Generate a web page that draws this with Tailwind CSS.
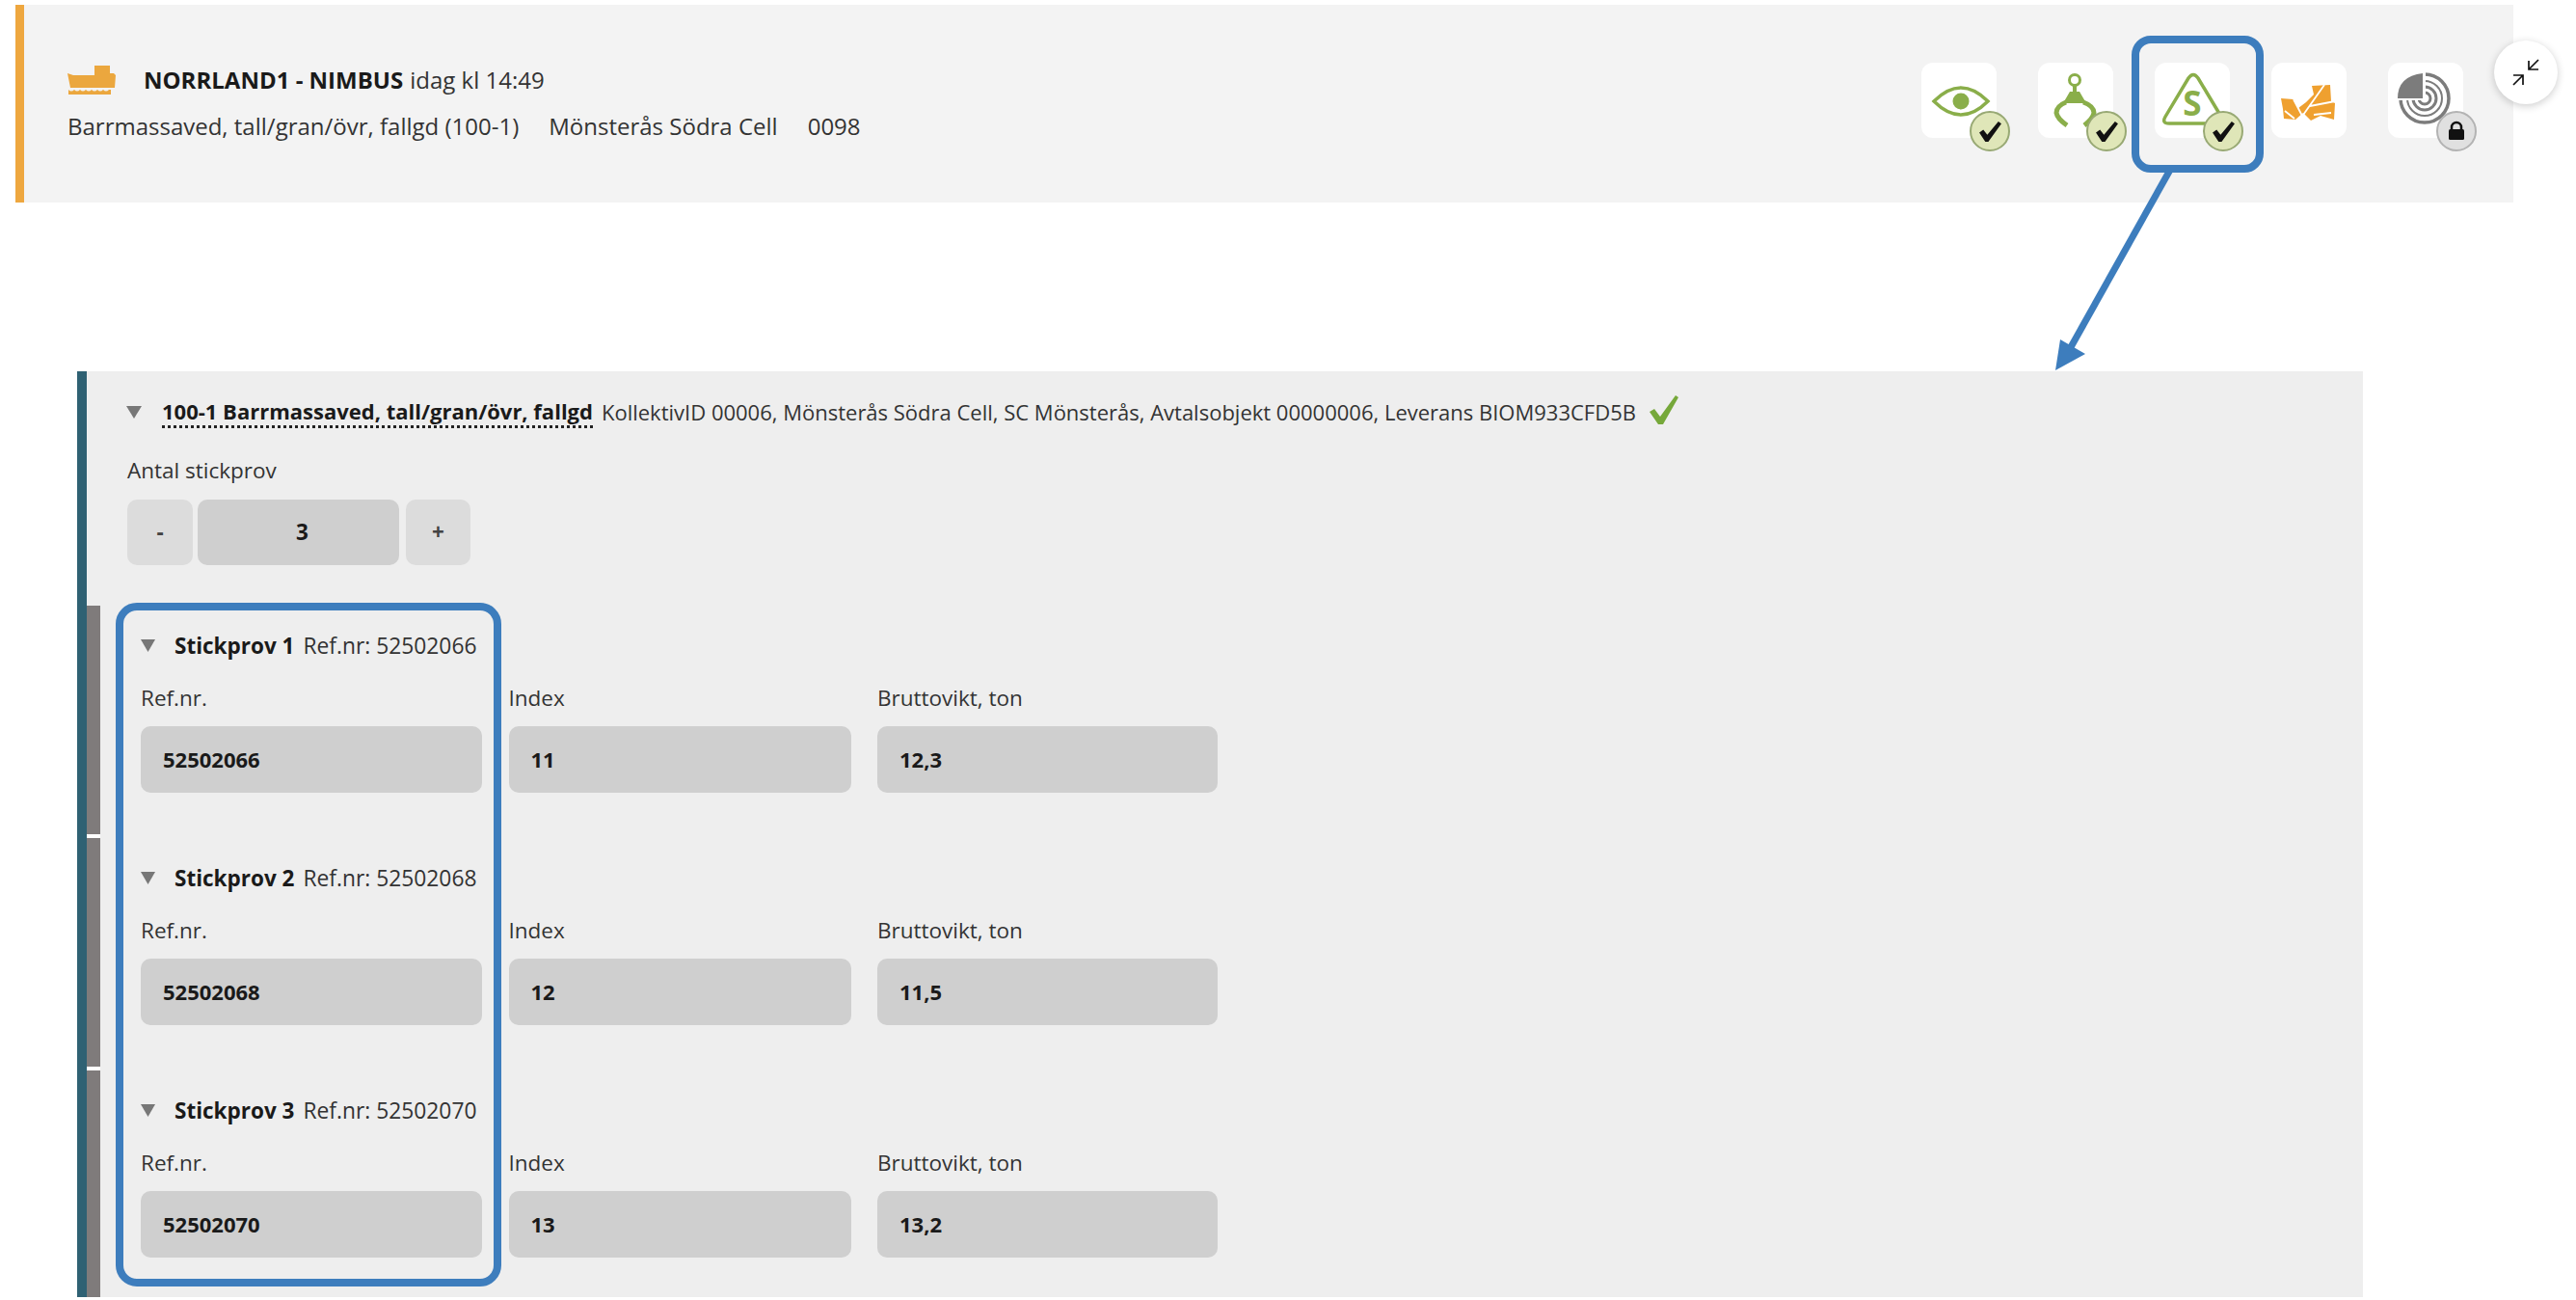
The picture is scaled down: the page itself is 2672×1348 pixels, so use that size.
<!DOCTYPE html>
<html lang="sv">
<head>
  <meta charset="UTF-8">
  <title>Stickprov</title>
  <script src="https://cdn.jsdelivr.net/npm/@tailwindcss/browser@4"></script>
</head>
<body class="bg-white font-['Open_Sans',sans-serif] text-[22.5px] text-[#333] w-[2672px] h-[1348px] overflow-hidden relative">

<!-- header -->
<div class="relative ml-[16px] mt-[5px] w-[2591px] h-[205px] bg-[#f3f3f3] border-l-[9px] border-[#eea73f] flex justify-between pl-[45px] pr-[52px] text-[24px]">
  <div class="pt-[58px]">
    <div class="flex items-center h-[40px]">
      <svg class="w-[50px] h-[30px] mr-[29px]" viewBox="0 0 50 30">
        <path fill="#eba73e" d="M0 8l6 2h22V0h16v8h4l2 2-1 13H3z"/>
        <path fill="#eba73e" d="M1 25q3 3 6 0q3 3 6 0q3 3 6 0q3 3 6 0q3 3 6 0q3 3 6 0q3 3 6 0l2 0v5H1z"/>
      </svg>
      <span class="font-bold text-[#1a1a1a]">NORRLAND1 - NIMBUS</span>
      <span class="ml-[7px]">idag kl 14:49</span>
    </div>
    <div class="flex mt-[8px] h-[40px] items-center">
      <span>Barrmassaved, tall/gran/övr, fallgd (100-1)</span>
      <span class="ml-[31px]">Mönsterås Södra Cell</span>
      <span class="ml-[31px]">0098</span>
    </div>
  </div>

  <div class="flex gap-[43px] pt-[60px]">
    <!-- eye -->
    <div class="relative w-[78px] h-[78px] bg-white rounded-[12px]">
      <svg class="w-[78px] h-[78px]" viewBox="0 0 78 78">
        <path fill="none" stroke="#8aae4a" stroke-width="3.5" d="M13 40Q27 26 41 26Q55 26 69 40Q55 54 41 54Q27 54 13 40Z"/>
        <circle cx="41" cy="40" r="8.5" fill="#8aae4a"/>
      </svg>
      <div class="absolute left-[50px] top-[50px] w-[42px] h-[42px] rounded-full bg-[#dfe6b8] border-2 border-[#98a974] flex items-center justify-center">
        <svg class="w-[25px] h-[25px]" viewBox="0 0 24 24"><path fill="#111" d="M1 13l4-3 4 5L20 2l3 2L10 22H7z"/></svg>
      </div>
    </div>
    <!-- grapple -->
    <div class="relative w-[78px] h-[78px] bg-white rounded-[12px]">
      <svg class="w-[78px] h-[78px]" viewBox="0 0 78 78">
        <circle cx="38" cy="18" r="5.5" fill="none" stroke="#8aae4a" stroke-width="3"/>
        <path fill="#8aae4a" d="M36 23h4v7h3l7 12H26l7-12h3z"/>
        <path fill="none" stroke="#8aae4a" stroke-width="5" d="M29 41Q19 45 19 52Q20 58 30 65M47 41Q58 45 58 52Q57 58 48 65"/>
      </svg>
      <div class="absolute left-[50px] top-[50px] w-[42px] h-[42px] rounded-full bg-[#dfe6b8] border-2 border-[#98a974] flex items-center justify-center">
        <svg class="w-[25px] h-[25px]" viewBox="0 0 24 24"><path fill="#111" d="M1 13l4-3 4 5L20 2l3 2L10 22H7z"/></svg>
      </div>
    </div>
    <!-- s triangle -->
    <div class="relative w-[78px] h-[78px] bg-white rounded-[12px]">
      <svg class="w-[78px] h-[78px]" viewBox="0 0 78 78">
        <path fill="none" stroke="#8aae4a" stroke-width="3.5" d="M35 16Q40 9 45 16L69 56Q73 63 65 63H15Q7 63 11 56Z"/>
        <text x="39" y="55" text-anchor="middle" font-size="35" font-weight="700" fill="#8aae4a" font-family="Open Sans">S</text>
      </svg>
      <div class="absolute left-[50px] top-[50px] w-[42px] h-[42px] rounded-full bg-[#dfe6b8] border-2 border-[#98a974] flex items-center justify-center">
        <svg class="w-[25px] h-[25px]" viewBox="0 0 24 24"><path fill="#111" d="M1 13l4-3 4 5L20 2l3 2L10 22H7z"/></svg>
      </div>
    </div>
    <!-- logs -->
    <div class="relative w-[78px] h-[78px] bg-white rounded-[12px]">
      <svg class="w-[78px] h-[78px]" viewBox="0 0 78 78">
        <path fill="#efa02f" d="M10 37L23 38L28 47L36 41L44 33L42 24L61 23L62 40L66 42L65 59L51 55L41 60L33 52L25 59L13 58L12 48Z"/>
        <path fill="none" stroke="#fff" stroke-width="1.800" d="M31 57L55 23M40 45L66 40M23 38L33 57M14 50L24 58M44 54L62 52"/>
      </svg>
    </div>
    <!-- radar -->
    <div class="relative w-[78px] h-[78px] bg-white rounded-[12px]">
      <svg class="w-[78px] h-[78px]" viewBox="0 0 78 78" fill="none" stroke="#7c7c7c">
        <circle cx="38" cy="37" r="25" stroke-width="3.5"/>
        <circle cx="38" cy="37" r="18" stroke-width="2"/>
        <circle cx="38" cy="37" r="12" stroke-width="3"/>
        <circle cx="38" cy="37" r="6" stroke-width="3"/>
        <path fill="#fff" stroke="none" d="M6 4H39V39H6Z"/>
        <path fill="#7c7c7c" stroke="none" d="M36 11V37H10Q10 14 36 11Z"/>
      </svg>
      <div class="absolute left-[50px] top-[50px] w-[42px] h-[42px] rounded-full bg-[#e0e0e0] border-2 border-[#b3b3b3] flex items-center justify-center">
        <svg class="w-[20px] h-[22px]" viewBox="0 0 20 22">
          <path fill="none" stroke="#111" stroke-width="2.5" d="M5 10V7a5 5 0 0 1 10 0v3"/>
          <rect x="2" y="9" width="16" height="11" rx="1.5" fill="#111"/>
        </svg>
      </div>
    </div>
  </div>

  <!-- collapse -->
  <button class="absolute left-[2562px] top-[37px] w-[66px] h-[66px] rounded-full bg-white shadow-[0_2px_8px_rgba(0,0,0,0.2)] flex items-center justify-center">
    <svg class="w-[30px] h-[30px]" viewBox="0 0 30 30" fill="none" stroke="#111" stroke-width="1.7">
      <path d="M28 2L18 12M18 3V12H28M2 28L12 18M2 18H12V28" stroke-linejoin="miter"/>
    </svg>
  </button>
</div>

<!-- assortment panel -->
<div class="ml-[80px] mt-[175px] w-[2371px] h-[960px] overflow-hidden bg-[#eeeeee] border-l-[10px] border-[#2f6173]">
  <div class="pl-[42px] pt-[22px]">
    <div class="flex items-center h-[40px] text-[22px]">
      <svg class="w-[16px] h-[13px] mr-[21px] -ml-[1px]" viewBox="0 0 16 13"><path fill="#777" d="M0 0H16L8 13Z"/></svg>
      <span class="font-bold text-[#1a1a1a] border-b-[3px] border-dotted border-[#222] leading-[30px]">100-1 Barrmassaved, tall/gran/övr, fallgd</span>
      <span class="ml-[9px]">KollektivID 00006, Mönsterås Södra Cell, SC Mönsterås, Avtalsobjekt 00000006, Leverans BIOM933CFD5B</span>
      <svg class="w-[34px] h-[34px] ml-[12px] -mt-[4px]" viewBox="0 0 34 34"><path fill="#76a83a" d="M2 19l5-3 6 8L29 2l3 2-16 28h-5z"/></svg>
    </div>
    <div class="mt-[25px] h-[32px] leading-[32px]">Antal stickprov</div>
    <div class="flex mt-[14px] h-[68px]">
      <div class="w-[68px] bg-[#dcdcdc] rounded-[10px] flex items-center justify-center font-bold text-[#444]">-</div>
      <div class="w-[209px] ml-[5px] pl-[8px] pb-[1px] bg-[#cfcfcf] rounded-[10px] flex items-center justify-center font-bold text-[#1a1a1a]">3</div>
      <div class="w-[67px] ml-[7px] bg-[#dcdcdc] rounded-[10px] flex items-center justify-center font-bold text-[#444]">+</div>
    </div>
  </div>

  <div class="mt-[42px]">
    <!-- stickprov 1 -->
    <div class="flex h-[241px]">
      <div class="w-[14px] bg-[#7f7b7b] border-b-[4px] border-white"></div>
      <div class="pl-[42px] pt-[25px]">
        <div class="flex items-center h-[34px]">
          <svg class="w-[15px] h-[13px] mr-[20px] -mt-[2px]" viewBox="0 0 15 13"><path fill="#777" d="M0 0H15L7.5 13Z"/></svg>
          <span class="font-bold text-[#1a1a1a]">Stickprov 1</span>
          <span class="ml-[9px] text-[22.8px]">Ref.nr: 52502066</span>
        </div>
        <div class="grid grid-cols-[354px_355px_353px] gap-x-[27.5px] mt-[21px]">
          <div><div class="h-[32px] leading-[32px]">Ref.nr.</div><div class="mt-[13px] h-[69px] bg-[#cfcfcf] rounded-[10px] pl-[23px] flex items-center font-bold text-[22px] text-[#1a1a1a]">52502066</div></div>
          <div><div class="h-[32px] leading-[32px]">Index</div><div class="mt-[13px] h-[69px] bg-[#cfcfcf] rounded-[10px] pl-[23px] flex items-center font-bold text-[22px] text-[#1a1a1a]">11</div></div>
          <div><div class="h-[32px] leading-[32px]">Bruttovikt, ton</div><div class="mt-[13px] h-[69px] bg-[#cfcfcf] rounded-[10px] pl-[23px] flex items-center font-bold text-[22px] text-[#1a1a1a]">12,3</div></div>
        </div>
      </div>
    </div>
    <!-- stickprov 2 -->
    <div class="flex h-[241px]">
      <div class="w-[14px] bg-[#7f7b7b] border-b-[4px] border-white"></div>
      <div class="pl-[42px] pt-[25px]">
        <div class="flex items-center h-[34px]">
          <svg class="w-[15px] h-[13px] mr-[20px] -mt-[2px]" viewBox="0 0 15 13"><path fill="#777" d="M0 0H15L7.5 13Z"/></svg>
          <span class="font-bold text-[#1a1a1a]">Stickprov 2</span>
          <span class="ml-[9px] text-[22.8px]">Ref.nr: 52502068</span>
        </div>
        <div class="grid grid-cols-[354px_355px_353px] gap-x-[27.5px] mt-[21px]">
          <div><div class="h-[32px] leading-[32px]">Ref.nr.</div><div class="mt-[13px] h-[69px] bg-[#cfcfcf] rounded-[10px] pl-[23px] flex items-center font-bold text-[22px] text-[#1a1a1a]">52502068</div></div>
          <div><div class="h-[32px] leading-[32px]">Index</div><div class="mt-[13px] h-[69px] bg-[#cfcfcf] rounded-[10px] pl-[23px] flex items-center font-bold text-[22px] text-[#1a1a1a]">12</div></div>
          <div><div class="h-[32px] leading-[32px]">Bruttovikt, ton</div><div class="mt-[13px] h-[69px] bg-[#cfcfcf] rounded-[10px] pl-[23px] flex items-center font-bold text-[22px] text-[#1a1a1a]">11,5</div></div>
        </div>
      </div>
    </div>
    <!-- stickprov 3 -->
    <div class="flex h-[241px]">
      <div class="w-[14px] bg-[#7f7b7b] border-b-[4px] border-white"></div>
      <div class="pl-[42px] pt-[25px]">
        <div class="flex items-center h-[34px]">
          <svg class="w-[15px] h-[13px] mr-[20px] -mt-[2px]" viewBox="0 0 15 13"><path fill="#777" d="M0 0H15L7.5 13Z"/></svg>
          <span class="font-bold text-[#1a1a1a]">Stickprov 3</span>
          <span class="ml-[9px] text-[22.8px]">Ref.nr: 52502070</span>
        </div>
        <div class="grid grid-cols-[354px_355px_353px] gap-x-[27.5px] mt-[21px]">
          <div><div class="h-[32px] leading-[32px]">Ref.nr.</div><div class="mt-[13px] h-[69px] bg-[#cfcfcf] rounded-[10px] pl-[23px] flex items-center font-bold text-[22px] text-[#1a1a1a]">52502070</div></div>
          <div><div class="h-[32px] leading-[32px]">Index</div><div class="mt-[13px] h-[69px] bg-[#cfcfcf] rounded-[10px] pl-[23px] flex items-center font-bold text-[22px] text-[#1a1a1a]">13</div></div>
          <div><div class="h-[32px] leading-[32px]">Bruttovikt, ton</div><div class="mt-[13px] h-[69px] bg-[#cfcfcf] rounded-[10px] pl-[23px] flex items-center font-bold text-[22px] text-[#1a1a1a]">13,2</div></div>
        </div>
      </div>
    </div>
  </div>
</div>

<!-- blue callouts drawn over the screenshot -->
<div class="absolute left-[2211px] top-[37px] w-[137px] h-[142px] border-[8px] border-[#3d7dbd] rounded-[20px]"></div>
<div class="absolute left-[120px] top-[625px] w-[400px] h-[709px] border-[8px] border-[#3d7dbd] rounded-[22px]"></div>
<svg class="absolute left-[2120px] top-[170px] w-[140px] h-[220px]" viewBox="0 0 140 220">
  <path fill="none" stroke="#3d7dbd" stroke-width="7" d="M131 6L28 190"/>
  <path fill="#3d7dbd" d="M12 214L17 182L43 197Z"/>
</svg>
</body>
</html>
